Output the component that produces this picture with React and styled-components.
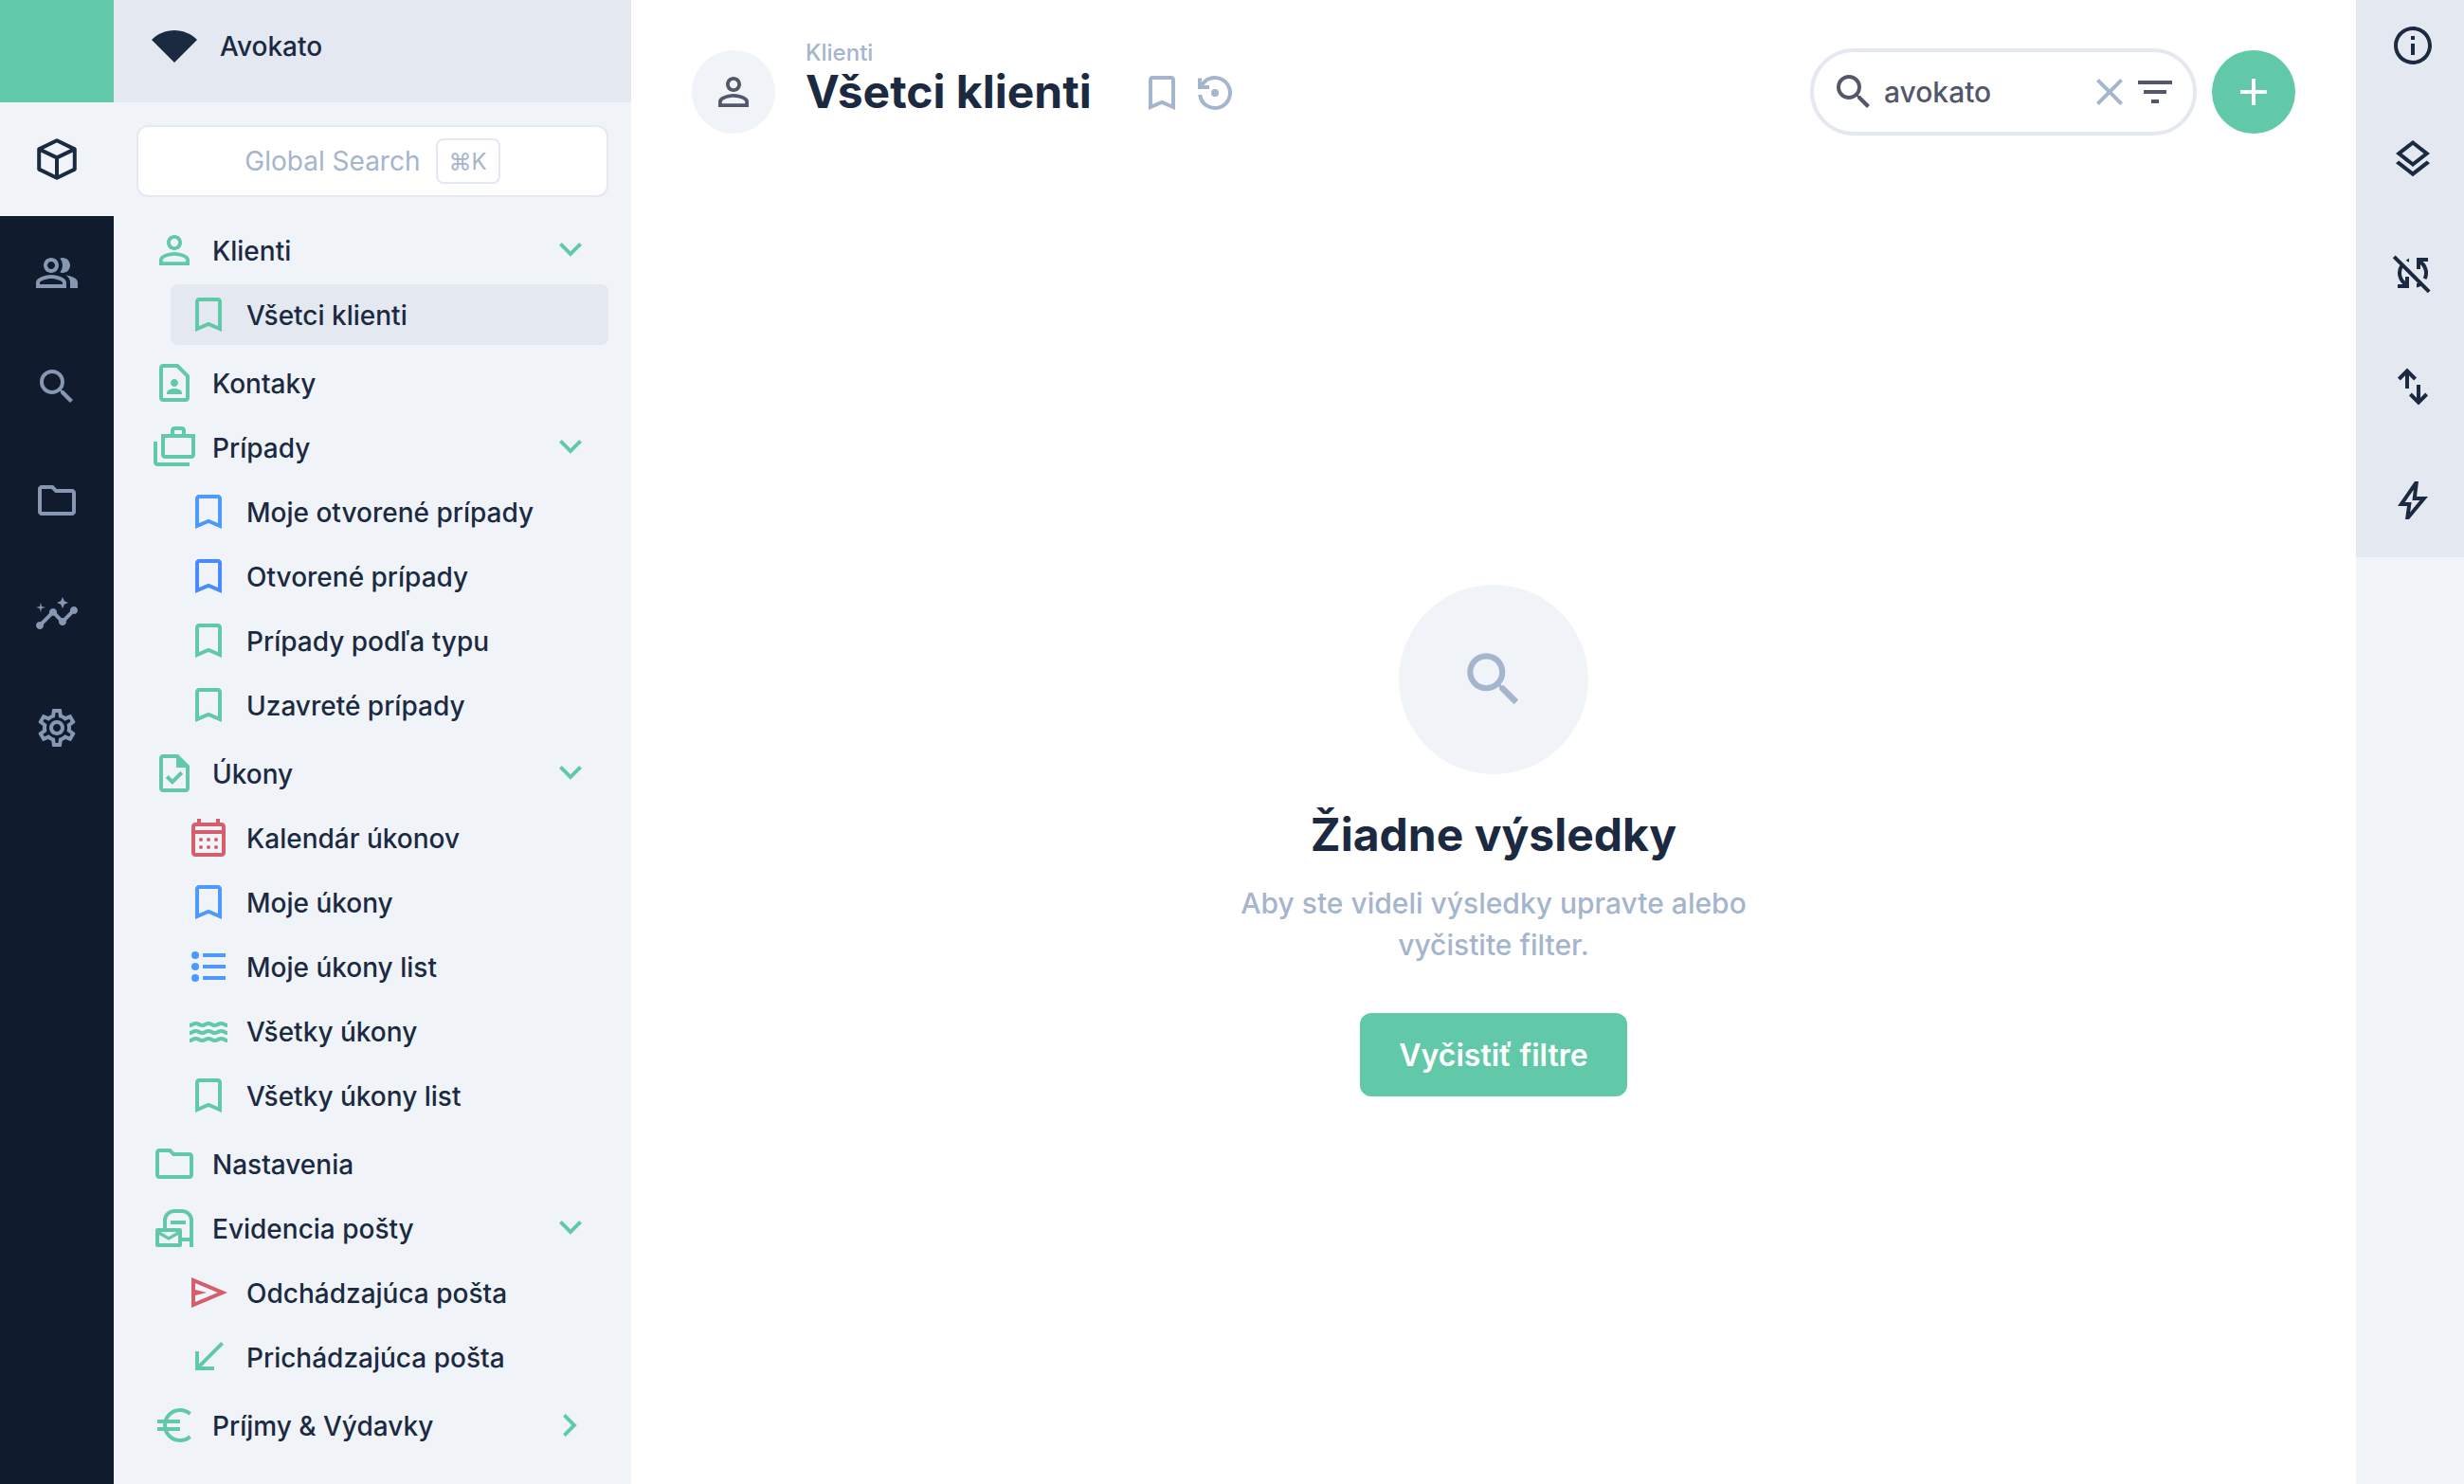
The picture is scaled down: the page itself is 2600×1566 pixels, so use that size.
import React from 'react';
import styled, { createGlobalStyle } from 'styled-components';
import {
  MdOutlinePeopleAlt, MdSearch, MdInsights, MdOutlineSettings,
  MdPersonOutline, MdOutlineContactPage, MdOutlineCases, MdBookmarkBorder,
  MdCallReceived, MdClose, MdFilterList, MdAdd, MdInfoOutline, MdOutlineLayers,
} from 'react-icons/md';

const c = {
  green: '#61c9a8', navy: '#1b2a41', rail: '#101b2d', panel: '#f0f4f9', band: '#e4e8f0',
  muted: '#a5b5cd', railIcon: '#8797b2', ink: '#525769', blue: '#4c9aff', blue2: '#488aff', red: '#d65d6b',
};

const Global = createGlobalStyle`
  *, *::before, *::after { box-sizing: border-box; }
  body { margin: 0; background: #fff; color: ${c.navy}; font-family: Inter, "Liberation Sans", sans-serif; font-size: 28px; font-weight: 500; }
  button, input { font: inherit; color: inherit; border: 0; background: none; padding: 0; margin: 0; }
  a { color: inherit; text-decoration: none; }
  ul { list-style: none; margin: 0; padding: 0; }
  svg { display: block; flex: none; }
`;

const Svg = ({ size = 48, viewBox = '0 0 24 24', children }) => (
  <svg width={size} height={size} viewBox={viewBox} fill="currentColor" fillRule="evenodd" aria-hidden="true">{children}</svg>
);
const Fan = () => <Svg><path d="M12 4C7.31 4 3.07 5.9 0 8.98L12 21 24 8.98C20.93 5.9 16.69 4 12 4z" /></Svg>;
const Cube = () => (
  <Svg><path fill="none" stroke="currentColor" strokeWidth="2" strokeLinejoin="round" d="M12 2.1 21.4 6.7v10.6L12 21.9 2.6 17.3V6.7zM2.6 6.7 12 11.2l9.4-4.5M12 11.2v10.7" /></Svg>
);
const Folder = () => <Svg><path d="M10 4H4c-1.1 0-2 .9-2 2v12c0 1.1.9 2 2 2h16c1.1 0 2-.9 2-2V8c0-1.1-.9-2-2-2h-8zM4 6h5.17l2 2H20v10H4z" /></Svg>;
const Task = () => <Svg><path d="M14 2H6c-1.1 0-2 .9-2 2v16c0 1.1.9 2 2 2h12c1.1 0 2-.9 2-2V8l-6-6zm4 18H6V4h7v5h5v11zM8.82 13.05 7.4 14.46 10.94 18l5.66-5.66-1.41-1.41-4.24 4.24z" /></Svg>;
const Calendar = () => (
  <Svg>
    <path d="M19 4h-1V2h-2v2H8V2H6v2H5c-1.1 0-2 .9-2 2v14c0 1.1.9 2 2 2h14c1.1 0 2-.9 2-2V6c0-1.1-.9-2-2-2zm0 16H5V10h14v10zm0-12H5V6h14v2z" />
    {[8, 12, 16].map(x => [13, 17].map(y => <circle key={`${x}-${y}`} cx={x} cy={y} r="1" />))}
  </Svg>
);
const List = () => <Svg><circle cx="5" cy="6" r="2" /><circle cx="5" cy="12" r="2" /><circle cx="5" cy="18" r="2" /><path d="M9 5h12v2H9zM9 11h12v2H9zM9 17h12v2H9z" /></Svg>;
const wave = 'c1.67 0 1.67-1 3.33-1s1.67 1 3.34 1 1.66-1 3.33-1 1.67 1 3.33 1 1.67-1 3.34-1 1.66 1 3.33 1';
const Waves = () => <Svg><path fill="none" stroke="currentColor" strokeWidth="2" d={`M2 9${wave}M2 13${wave}M2 17${wave}`} /></Svg>;
const Mailbox = () => (
  <Svg><path fill="none" stroke="currentColor" strokeWidth="2" d="M7 12V8a5 5 0 0 1 5-5h4a5 5 0 0 1 5 5v14M10 9h8M16 18h5" /><path fill="none" stroke="currentColor" strokeWidth="2" strokeLinejoin="round" d="M3 13h12v8H3z" /><path fill="none" stroke="currentColor" strokeWidth="1.6" d="m3 14 6 3.5 6-3.5" /></Svg>
);
const Send = () => <Svg><path d="M3 20V4l19 8zm2-3 11.85-5L5 7v3.5l6 1.5-6 1.5z" /></Svg>;
const Euro = () => <Svg><path fill="none" stroke="currentColor" strokeWidth="2" d="M20.3 6A8 8 0 1 0 20.3 18M3 10h12M3 14h12" /></Svg>;
const ChevronDown = () => <Svg><path d="m12 15.4-6-6L7.4 8l4.6 4.6L16.6 8 18 9.4z" /></Svg>;
const ChevronRight = () => <Svg><path d="M12.6 12 8 7.4 9.4 6l6 6-6 6L8 16.6z" /></Svg>;
const Restore = () => (
  <Svg><path fill="none" stroke="currentColor" strokeWidth="2" d="M4.06 13A8 8 0 1 0 6.3 6.4L4 8.7M4 4.2V9h5" /><circle cx="12" cy="12" r="2" /></Svg>
);
const SyncOff = () => (
  <Svg>
    <path fill="none" stroke="currentColor" strokeWidth="2" d="M2.1 3.4 20.6 21.9M15.2 5.8A7 7 0 0 1 18.3 15.1M8.8 18.2A7 7 0 0 1 6.4 7.8M20 5h-5v5M4 19h5v-5" />
    <path d="M10 4.3v2.1l-1.7-1zM14 17.5v2.2q1.7-.4 2.9-1.2l-1.3-1.3z" />
  </Svg>
);
const Swap = () => <Svg><path fill="none" stroke="currentColor" strokeWidth="2" d="M9 13V4M4.7 8 9 3.7 13.3 8M15 11v9M10.7 16l4.3 4.3 4.3-4.3" /></Svg>;
const Bolt = () => <Svg viewBox="0 -960 960 960"><path d="m422-232 207-248H469l29-227-185 267h139l-30 208ZM320-80l40-280H160l360-520h80l-40 320h240L400-80h-80Z" /></Svg>;

const Shell = styled.div`
  display: flex;
  align-items: stretch;
  min-height: 100vh;
`;
const Rail = styled.nav`
  flex: 0 0 120px;
  background: ${c.rail};
`;
const RailBrand = styled.div`
  height: 108px;
  background: ${c.green};
`;
const RailButton = styled.button`
  display: grid;
  place-items: center;
  width: 100%;
  height: 120px;
  background: ${p => (p.$active ? c.panel : 'transparent')};
  color: ${p => (p.$active ? c.navy : c.railIcon)};
`;
const Sidebar = styled.aside`
  flex: 0 0 546px;
  background: ${c.panel};
`;
const Workspace = styled.header`
  display: flex;
  align-items: center;
  gap: 24px;
  height: 108px;
  padding: 0 40px 12px;
  background: ${c.band};
`;
const SidebarBody = styled.div`
  padding: 24px;
`;
const GlobalSearch = styled.button`
  display: flex;
  align-items: center;
  justify-content: center;
  gap: 16px;
  width: 100%;
  height: 76px;
  margin-bottom: 24px;
  border: 2px solid ${c.band};
  border-radius: 12px;
  background: #fff;
  color: ${c.muted};
  font-weight: 400;
`;
const Kbd = styled.kbd`
  display: grid;
  place-items: center;
  height: 48px;
  padding: 0 12px;
  border: 2px solid ${c.band};
  border-radius: 8px;
  font-family: inherit;
  font-size: 24px;
`;
const Menu = styled.ul`
  display: flex;
  flex-direction: column;
  gap: 4px;
`;
const SubMenu = styled(Menu)`
  padding: 4px 0 4px 36px;
`;
const MenuLink = styled.a`
  display: flex;
  align-items: center;
  gap: 16px;
  height: 64px;
  padding: 0 16px;
  border-radius: 8px;
  background: ${p => (p.$active ? c.band : 'transparent')};
`;
const Glyph = styled.span`
  color: ${p => p.$color || c.green};
`;
const Label = styled.span`
  flex: 1;
  padding-top: 2px;
`;

const Main = styled.main`
  flex: 1;
  display: flex;
  flex-direction: column;
  min-width: 0;
`;
const Top = styled.header`
  display: flex;
  align-items: center;
  height: 194px;
  padding: 0 64px;
`;
const Round = styled.div`
  display: grid;
  place-items: center;
  flex: none;
  width: ${p => p.$size}px;
  height: ${p => p.$size}px;
  border-radius: 50%;
  background: ${c.panel};
  color: ${p => p.$color};
`;
const Heading = styled.div`
  display: flex;
  flex-direction: column;
  margin: 0 50px 28px 32px;
`;
const Crumb = styled.a`
  color: ${c.muted};
  font-size: 24px;
  line-height: 28px;
`;
const Title = styled.h1`
  margin: 0;
  font-size: 48px;
  line-height: 54px;
  font-weight: 700;
`;
const Tools = styled.div`
  display: flex;
  gap: 8px;
  margin-right: auto;
  padding-top: 2px;
  color: ${c.muted};
`;
const SearchBox = styled.label`
  display: flex;
  align-items: center;
  width: 408px;
  height: 92px;
  margin-right: 16px;
  padding: 0 16px 0 18px;
  border: 4px solid ${c.band};
  border-radius: 46px;
  color: ${c.ink};
`;
const SearchInput = styled.input`
  flex: 1;
  min-width: 0;
  margin-left: 8px;
  outline: 0;
  font-size: 30px;
`;
const IconButton = styled.button`
  display: block;
  color: ${p => p.$color || 'inherit'};
`;
const AddButton = styled.button`
  display: grid;
  place-items: center;
  width: 88px;
  height: 88px;
  border-radius: 50%;
  background: ${c.green};
  color: #fff;
`;
const Empty = styled.section`
  flex: 1;
  display: flex;
  flex-direction: column;
  align-items: center;
  justify-content: center;
  padding: 194px 0 180px;
  text-align: center;
`;
const EmptyTitle = styled.h2`
  margin: 34px 0 20px;
  font-size: 48px;
  line-height: 60px;
  font-weight: 700;
`;
const EmptyText = styled.p`
  max-width: 560px;
  margin: 0 0 50px;
  color: ${c.muted};
  font-size: 30px;
  line-height: 44px;
`;
const PrimaryButton = styled.button`
  height: 88px;
  padding: 0 41px;
  border-radius: 12px;
  background: ${c.green};
  color: #fff;
  font-size: 32px;
  font-weight: 600;
`;
const Side = styled.aside`
  flex: 0 0 114px;
  background: ${c.panel};
`;
const SideTools = styled.div`
  display: flex;
  flex-direction: column;
  gap: 72px;
  padding: 24px 0 36px 36px;
  background: ${c.band};
`;

const menu = [
  { label: 'Klienti', icon: MdPersonOutline, items: [
    { label: 'Všetci klienti', icon: MdBookmarkBorder, active: true },
  ] },
  { label: 'Kontaky', icon: MdOutlineContactPage },
  { label: 'Prípady', icon: MdOutlineCases, items: [
    { label: 'Moje otvorené prípady', icon: MdBookmarkBorder, color: c.blue },
    { label: 'Otvorené prípady', icon: MdBookmarkBorder, color: c.blue2 },
    { label: 'Prípady podľa typu', icon: MdBookmarkBorder },
    { label: 'Uzavreté prípady', icon: MdBookmarkBorder },
  ] },
  { label: 'Úkony', icon: Task, items: [
    { label: 'Kalendár úkonov', icon: Calendar, color: c.red },
    { label: 'Moje úkony', icon: MdBookmarkBorder, color: c.blue },
    { label: 'Moje úkony list', icon: List, color: c.blue },
    { label: 'Všetky úkony', icon: Waves },
    { label: 'Všetky úkony list', icon: MdBookmarkBorder },
  ] },
  { label: 'Nastavenia', icon: Folder },
  { label: 'Evidencia pošty', icon: Mailbox, items: [
    { label: 'Odchádzajúca pošta', icon: Send, color: c.red },
    { label: 'Prichádzajúca pošta', icon: MdCallReceived },
  ] },
  { label: 'Príjmy & Výdavky', icon: Euro, closed: true },
];

const rail = [
  ['Moduly', Cube], ['Ľudia', MdOutlinePeopleAlt], ['Hľadať', MdSearch],
  ['Súbory', Folder], ['Prehľady', MdInsights], ['Nastavenia', MdOutlineSettings],
];
const tools = [
  ['Informácie', MdInfoOutline], ['Vrstvy', MdOutlineLayers], ['Synchronizácia', SyncOff],
  ['Import a export', Swap], ['Automatizácie', Bolt],
];

function Entry({ item }) {
  const Icon = item.icon;
  return (
    <li>
      <MenuLink href="#" $active={item.active}>
        <Glyph $color={item.color}><Icon size={48} /></Glyph>
        <Label>{item.label}</Label>
        {item.items && <Glyph><ChevronDown /></Glyph>}
        {item.closed && <Glyph><ChevronRight /></Glyph>}
      </MenuLink>
      {item.items && (
        <SubMenu>{item.items.map(i => <Entry key={i.label} item={i} />)}</SubMenu>
      )}
    </li>
  );
}

export default function App() {
  return (
    <>
      <Global />
      <Shell>
        <Rail>
          <RailBrand />
          {rail.map(([name, Icon], i) => (
            <RailButton key={name} aria-label={name} $active={i === 0}><Icon size={48} /></RailButton>
          ))}
        </Rail>
        <Sidebar>
          <Workspace><Fan /><Label>Avokato</Label></Workspace>
          <SidebarBody>
            <GlobalSearch>Global Search<Kbd>⌘K</Kbd></GlobalSearch>
            <Menu>{menu.map(item => <Entry key={item.label} item={item} />)}</Menu>
          </SidebarBody>
        </Sidebar>
        <Main>
          <Top>
            <Round $size={88} $color={c.ink}><MdPersonOutline size={48} /></Round>
            <Heading>
              <Crumb href="#">Klienti</Crumb>
              <Title>Všetci klienti</Title>
            </Heading>
            <Tools>
              <IconButton aria-label="Záložka"><MdBookmarkBorder size={48} /></IconButton>
              <IconButton aria-label="Obnoviť"><Restore /></IconButton>
            </Tools>
            <SearchBox>
              <MdSearch size={48} />
              <SearchInput aria-label="Hľadať" defaultValue="avokato" />
              <IconButton aria-label="Vymazať" $color={c.muted}><MdClose size={48} /></IconButton>
              <IconButton aria-label="Filter"><MdFilterList size={48} /></IconButton>
            </SearchBox>
            <AddButton aria-label="Pridať"><MdAdd size={48} /></AddButton>
          </Top>
          <Empty>
            <Round $size={200} $color={c.muted}><MdSearch size={74} /></Round>
            <EmptyTitle>Žiadne výsledky</EmptyTitle>
            <EmptyText>Aby ste videli výsledky upravte alebo vyčistite filter.</EmptyText>
            <PrimaryButton>Vyčistiť filtre</PrimaryButton>
          </Empty>
        </Main>
        <Side>
          <SideTools>
            {tools.map(([name, Icon]) => (
              <IconButton key={name} aria-label={name}><Icon size={48} /></IconButton>
            ))}
          </SideTools>
        </Side>
      </Shell>
    </>
  );
}
